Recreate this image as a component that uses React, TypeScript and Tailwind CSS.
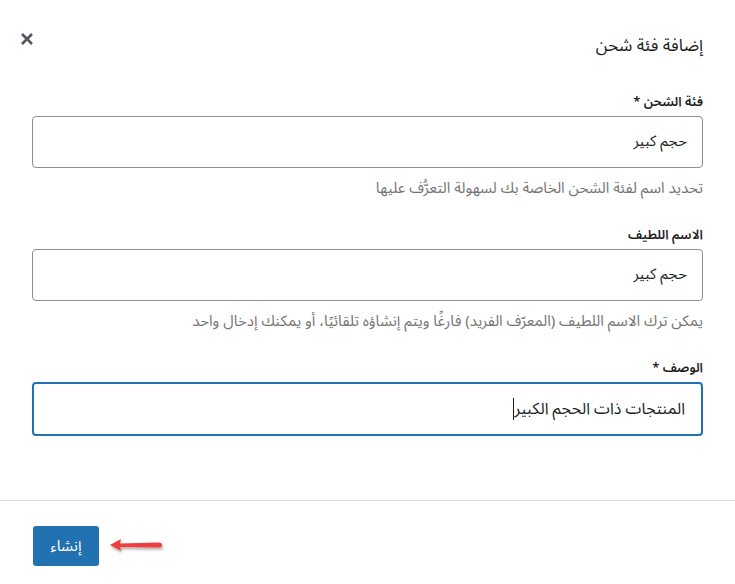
import React from "react";

const Field = ({ label, value, help, focused }: { label: string; value: string; help?: string; focused?: boolean }) => (
  <div className="flex flex-col">
    <label className="text-[13px] font-semibold text-[#1e1e1e] leading-[20px] mb-[4px]">{label}</label>
    <div
      className={
        focused
          ? "h-[54px] rounded-[4px] border-2 border-[#2271b1] flex items-center pr-[16px] pl-[16px]"
          : "h-[52px] rounded-[4px] border border-[#8c8f94] flex items-center pr-[15px] pl-[15px]"
      }
    >
      <span className={focused ? "text-[16px] text-[#1e1e1e] border-l border-[#1e1e1e] pl-[1px] leading-[22px]" : "text-[15px] text-[#1e1e1e]"}>{value}</span>
    </div>
    {help ? <p className="text-[15px] text-[#757575] mt-[10px] leading-[20px]">{help}</p> : null}
  </div>
);

export default function App() {
  return (
    <div dir="rtl" className="w-[735px] h-[584px] bg-white flex flex-col" style={{ fontFamily: '"Noto Sans Arabic", "Noto Sans", "DejaVu Sans", sans-serif' }}>
      <div className="flex items-start justify-between pr-[32px] pl-[20px] pt-[30px]">
        <h1 className="text-[17px] text-[#1e1e1e] mt-[4px]">إضافة فئة شحن</h1>
        <svg width="14" height="14" viewBox="0 0 14 14" className="mt-[2px]">
          <path d="M2 2 L12 12 M12 2 L2 12" stroke="#50575e" strokeWidth="2.6" strokeLinecap="butt" />
        </svg>
      </div>
      <div className="flex flex-col px-[32px] pt-[32px] gap-[27px]">
        <Field label="فئة الشحن *" value="حجم كبير" help="تحديد اسم لفئة الشحن الخاصة بك لسهولة التعرُّف عليها" />
        <Field label="الاسم اللطيف" value="حجم كبير" help="يمكن ترك الاسم اللطيف (المعرّف الفريد) فارغًا ويتم إنشاؤه تلقائيًا، أو يمكنك إدخال واحد" />
        <Field label="الوصف *" value="المنتجات ذات الحجم الكبير" focused />
      </div>
      <div className="mt-auto border-t border-[#dcdcde] h-[84px] flex items-start pt-[25px] px-[33px]" dir="ltr">
        <button className="h-[40px] w-[66px] rounded-[3px] bg-[#2271b1] text-white text-[15px] flex items-center justify-center">إنشاء</button>
        <svg width="60" height="22" viewBox="0 0 60 22" className="ml-[8px] mt-[10px]">
          <defs>
            <filter id="sh" x="-20%" y="-50%" width="140%" height="200%">
              <feDropShadow dx="1" dy="2" stdDeviation="1.5" floodColor="#000" floodOpacity="0.35" />
            </filter>
          </defs>
          <g filter="url(#sh)">
            <path d="M3 9 L14 3 L13 7.5 L52 6.5 Q55 6.5 55 9 Q55 11.5 52 11.5 L13 11 L14 15 Z" fill="#f03c3c" />
          </g>
        </svg>
      </div>
    </div>
  );
}
